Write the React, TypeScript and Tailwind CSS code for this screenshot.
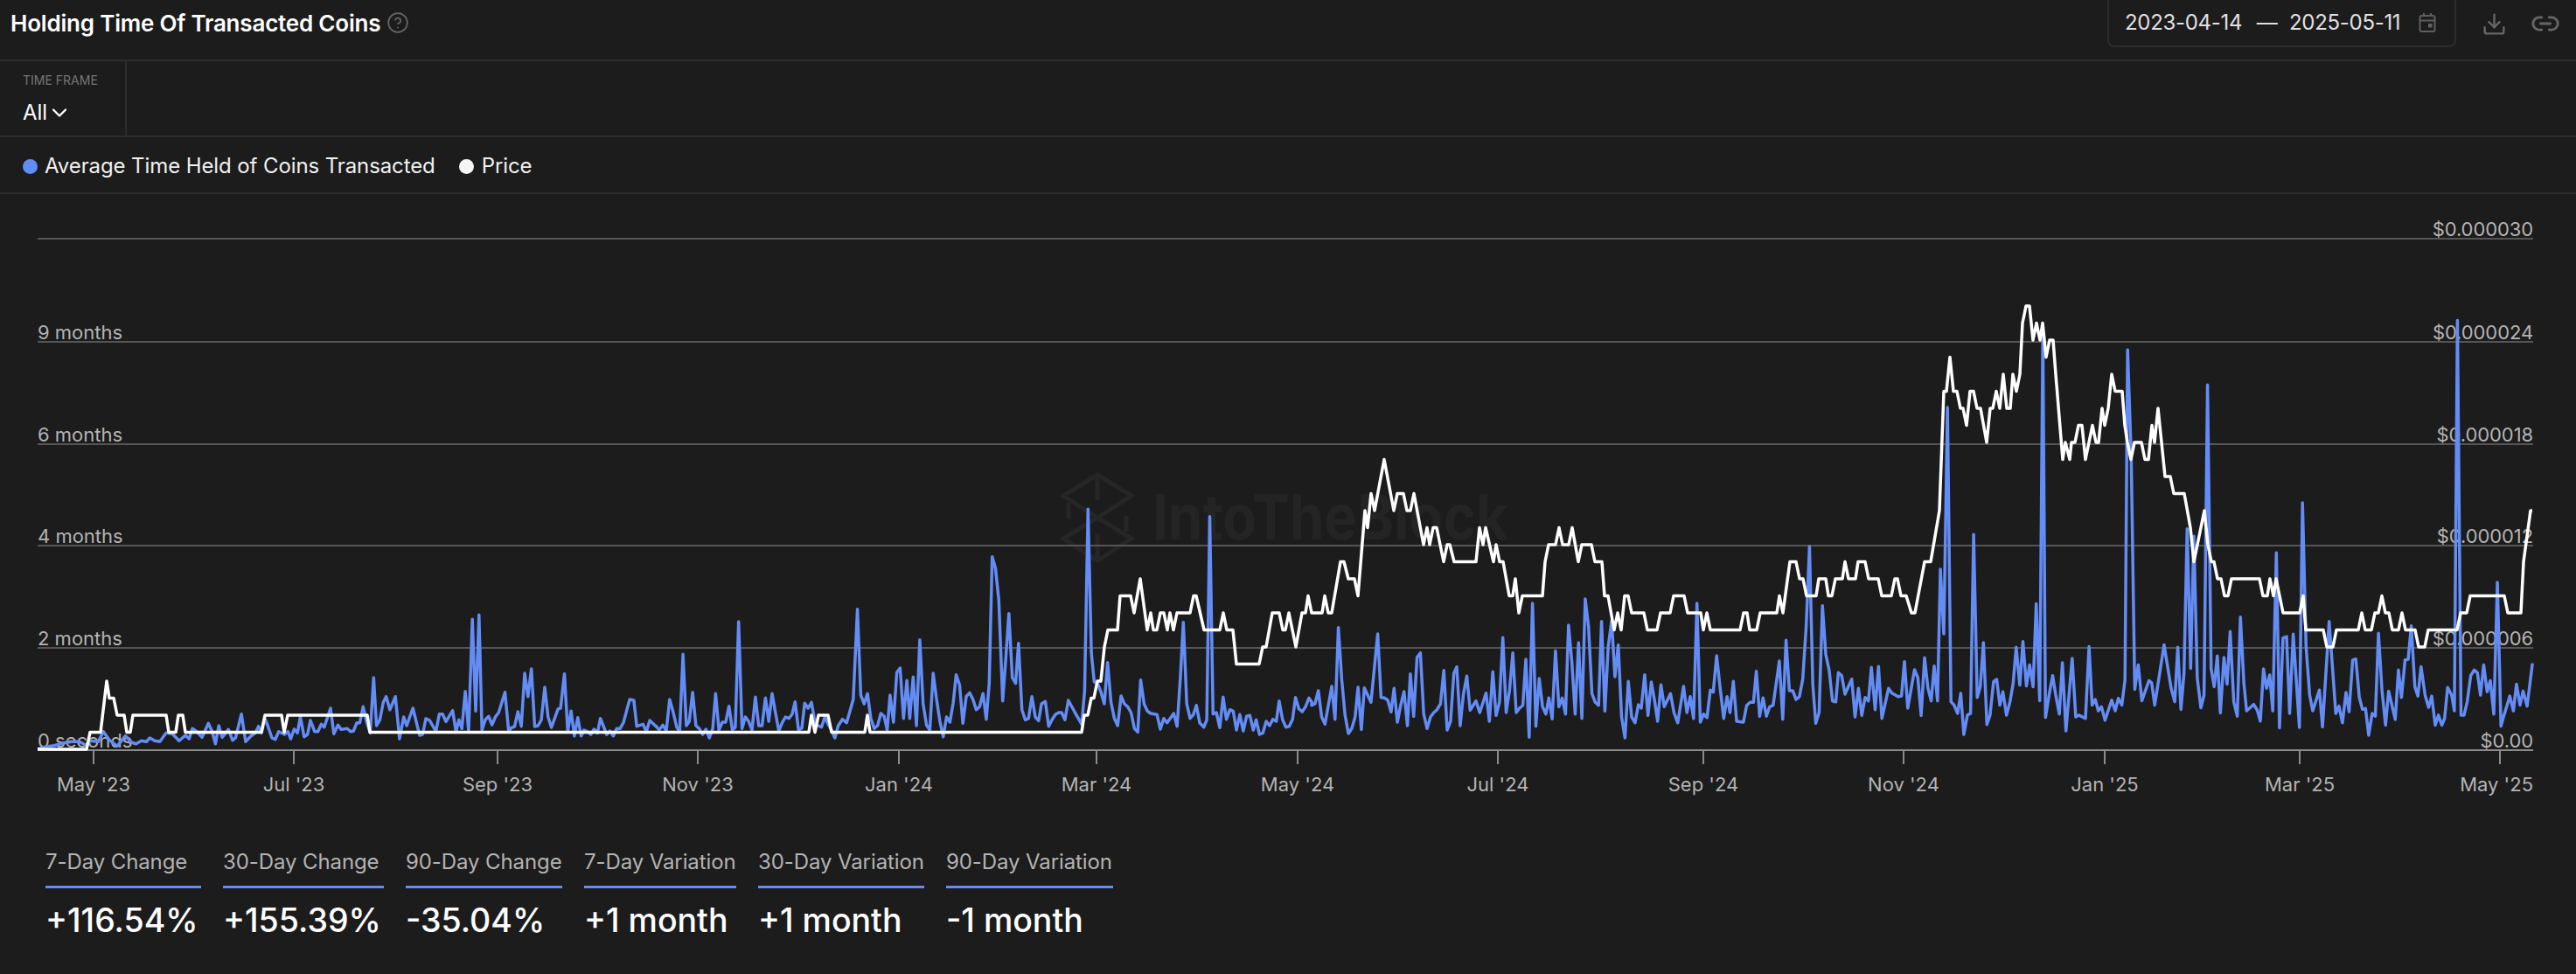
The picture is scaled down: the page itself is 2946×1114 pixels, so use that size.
import { ChevronDown, CircleHelp, Download, Link2 } from "lucide-react";

const AXIS_Y = 858;
const LEFT = 43;
const RIGHT = 2897;

// price is quantised, so it is kept as [x, steps above zero]
const priceSteps: [number, number][] = [
  [43, 0], [99, 0], [103, 1], [115, 1], [122, 4], [125, 3], [130, 3], [134, 2], [142, 2], [145, 1], [149, 1], [152, 2], [190, 2], [193, 1], [201, 1], [204, 2], [209, 2], [212, 1], [299, 1], [303, 2], [322, 2], [325, 1], [329, 2], [420, 2], [423, 1],
  [925, 1], [928, 2], [932, 1], [936, 2], [947, 2], [951, 1], [989, 1], [992, 2], [995, 1], [1237, 1], [1240, 2], [1244, 2], [1248, 3], [1251, 3], [1255, 4], [1259, 4], [1263, 6], [1267, 7], [1278, 7], [1281, 9], [1293, 9], [1297, 8], [1304, 10], [1312, 7], [1316, 8], [1319, 7], [1323, 7], [1327, 8], [1331, 8], [1335, 7], [1338, 8], [1342, 7], [1346, 8], [1361, 8], [1365, 9], [1368, 9], [1377, 7], [1395, 7], [1399, 8], [1403, 7], [1410, 7], [1414, 5], [1440, 5], [1444, 6], [1448, 6], [1455, 8], [1463, 8], [1467, 7], [1470, 7], [1474, 8], [1482, 6], [1489, 8], [1493, 8], [1496, 9], [1500, 8],
  [1512, 8], [1515, 9], [1519, 8], [1523, 8], [1533, 11], [1537, 11], [1542, 10], [1549, 10], [1553, 9], [1561, 14], [1564, 13], [1568, 15], [1572, 14], [1583, 17], [1594, 14], [1598, 15], [1605, 15], [1609, 14], [1613, 14], [1617, 15], [1628, 12], [1632, 13], [1635, 12], [1639, 13], [1643, 13], [1651, 11], [1655, 12], [1658, 12], [1663, 11], [1688, 11], [1692, 13], [1696, 12], [1699, 13], [1708, 11], [1711, 12], [1715, 11], [1719, 11], [1726, 9], [1730, 9], [1733, 10], [1737, 8], [1741, 9], [1764, 9], [1767, 11], [1771, 12], [1779, 12], [1783, 13], [1787, 12], [1794, 12], [1798, 13], [1805, 11], [1809, 12], [1820, 12], [1824, 11], [1832, 11], [1835, 9], [1839, 9], [1846, 7], [1850, 8], [1854, 7], [1858, 9], [1862, 9], [1866, 8], [1880, 8], [1884, 7], [1895, 7], [1899, 8], [1910, 8], [1914, 9], [1926, 9], [1930, 8], [1945, 8], [1948, 7], [1952, 8], [1956, 7], [1990, 7], [1994, 8], [1998, 8], [2001, 7], [2009, 7], [2013, 8], [2032, 8], [2035, 9], [2039, 8], [2047, 11], [2054, 11], [2058, 10], [2062, 10], [2066, 9], [2077, 9], [2080, 10], [2088, 10], [2091, 9], [2095, 9], [2099, 10], [2107, 10], [2110, 11], [2114, 10], [2122, 10], [2125, 11], [2133, 11], [2137, 10], [2148, 10], [2152, 9], [2163, 9], [2167, 10], [2170, 10], [2174, 9], [2180, 9], [2186, 8], [2190, 8], [2201, 11], [2208, 11], [2218, 14], [2223, 21], [2226, 21], [2230, 23], [2234, 21], [2238, 21], [2242, 20], [2245, 20], [2249, 19], [2253, 21], [2257, 21], [2261, 20], [2265, 20], [2272, 18], [2276, 20], [2279, 20], [2283, 21], [2287, 20], [2291, 22], [2295, 20], [2299, 20], [2302, 22], [2306, 21], [2310, 22], [2313, 25], [2317, 26], [2321, 26], [2325, 24], [2329, 25], [2333, 24], [2336, 25], [2340, 23], [2344, 24], [2348, 24], [2351, 22], [2359, 17], [2362, 18], [2367, 17], [2369, 18], [2373, 18], [2377, 19], [2381, 19], [2385, 17], [2393, 19], [2397, 18], [2400, 18], [2404, 20], [2407, 19], [2411, 20], [2415, 22], [2419, 21], [2427, 21], [2430, 19], [2433, 18], [2437, 17], [2441, 18], [2449, 18], [2453, 17], [2457, 17], [2461, 19], [2464, 18], [2468, 20], [2476, 16], [2482, 16], [2486, 15], [2498, 15], [2505, 13], [2509, 11], [2521, 14], [2525, 12], [2529, 11], [2532, 11], [2536, 10], [2540, 10], [2544, 9], [2548, 9], [2552, 10], [2584, 10], [2588, 9], [2593, 9], [2596, 10], [2600, 9], [2603, 10], [2611, 8], [2630, 8], [2634, 9], [2637, 7], [2657, 7], [2661, 6], [2668, 6], [2672, 7], [2697, 7], [2701, 8], [2705, 7], [2712, 7], [2716, 8], [2720, 8], [2724, 9], [2728, 8], [2732, 8], [2736, 7], [2743, 7], [2747, 8], [2751, 7], [2762, 7], [2766, 6], [2773, 6], [2777, 7], [2810, 7], [2814, 8], [2821, 8], [2825, 9], [2864, 9], [2868, 8], [2883, 8], [2886, 11], [2894, 14], [2896, 14],
];

const holdingA: [number, number][] = [
  [90, 650], [110, 642], [130, 638], [150, 630], [170, 625], [190, 625], [205, 637], [215, 622], [235, 625], [247, 590], [262, 620], [280, 640], [300, 605], [315, 628], [325, 632], [338, 622], [350, 625], [358, 612], [370, 622], [382, 625], [397, 595], [412, 598], [428, 622], [443, 603], [452, 615], [460, 580], [470, 590], [483, 610], [498, 562], [507, 590], [515, 632], [523, 570], [531, 610], [546, 583], [556, 620], [563, 612], [577, 530], [587, 625], [600, 605], [610, 595], [618, 572], [625, 595], [633, 545], [640, 570], [650, 612], [658, 617], [666, 590], [680, 600], [688, 590], [695, 615], [703, 582], [711, 595], [718, 540], [727, 608], [735, 600], [742, 552], [752, 590], [760, 590], [768, 565], [775, 575], [790, 510], [798, 598], [808, 568], [815, 583], [830, 580], [838, 590], [845, 588], [853, 560], [860, 560], [868, 505], [877, 560], [885, 595], [893, 405], [900, 570], [908, 550], [916, 490], [923, 470], [932, 515], [945, 470], [955, 615], [965, 540], [972, 570], [987, 510], [1003, 603], [1010, 600], [1018, 545], [1027, 552], [1042, 590], [1050, 530], [1058, 530], [1066, 556], [1082, 518], [1090, 590], [1097, 550], [1104, 580], [1112, 452], [1120, 590], [1129, 205], [1137, 520], [1145, 190], [1152, 585], [1160, 550], [1168, 538], [1176, 567], [1184, 540], [1192, 525], [1207, 455], [1216, 592], [1222, 577], [1230, 573], [1238, 522], [1246, 572], [1254, 390], [1262, 470], [1270, 375], [1278, 573], [1286, 570], [1294, 550], [1302, 438], [1310, 540], [1318, 576], [1334, 512], [1340, 510], [1349, 392], [1357, 590], [1365, 520], [1373, 605], [1381, 542], [1389, 605], [1396, 585], [1404, 590], [1412, 600], [1420, 582], [1428, 595], [1435, 545], [1450, 600], [1458, 588], [1466, 605], [1474, 580], [1482, 580], [1490, 560], [1505, 480], [1515, 483], [1522, 572], [1537, 565], [1545, 590], [1553, 552], [1568, 572],
];

const holdingB: [number, number][] = [
  [0, 870], [8, 885], [17, 868], [25, 888], [33, 780], [41, 820], [50, 875], [57, 890], [65, 625], [73, 870], [80, 855], [88, 755], [96, 870], [104, 880], [112, 900], [120, 882], [128, 912], [136, 880], [143, 760], [151, 885], [159, 858], [167, 858], [175, 803], [183, 885], [190, 875], [198, 513], [206, 880], [214, 840], [222, 855], [230, 885], [238, 772], [246, 870], [254, 870], [262, 775], [270, 855], [278, 760], [286, 825], [294, 888], [302, 860], [310, 840], [318, 845], [326, 830], [333, 788], [341, 885], [349, 878], [356, 793], [364, 810], [372, 790], [380, 855], [388, 870], [396, 875], [404, 840], [412, 865], [420, 885], [428, 912], [436, 870], [446, 848], [456, 860], [472, 780], [482, 470], [490, 765], [498, 795], [506, 760], [514, 845], [522, 880], [530, 870], [538, 828], [546, 838], [553, 885], [560, 765], [568, 858], [576, 688], [584, 672], [592, 845], [600, 715], [607, 845], [615, 703], [623, 870], [631, 575], [639, 795], [647, 868], [655, 885], [663, 690], [671, 780], [679, 855], [687, 908], [695, 840], [703, 858], [711, 790], [718, 695], [726, 730], [734, 862], [742, 770], [750, 757], [758, 780], [766, 815], [774, 805], [782, 760], [790, 848], [797, 725], [804, 290], [812, 330], [820, 440], [829, 785], [836, 650], [844, 485], [852, 705], [860, 725], [867, 587], [875, 815], [883, 850], [891, 845], [899, 770], [907, 840], [915, 853], [922, 795], [931, 787], [939, 872], [947, 850], [955, 832], [963, 825], [970, 825], [978, 850], [986, 783], [1002, 825], [1018, 865], [1025, 750], [1033, 127], [1041, 620], [1048, 720], [1056, 725], [1064, 755], [1072, 795], [1080, 653], [1088, 790], [1096, 845], [1104, 870], [1112, 768], [1120, 795], [1128, 805], [1136, 825], [1144, 880], [1152, 892], [1159, 713], [1167, 795], [1175, 820], [1183, 828], [1198, 832], [1206, 882], [1214, 845], [1222, 860], [1238, 828], [1246, 872], [1254, 700], [1261, 515], [1269, 795], [1277, 845], [1285, 832], [1292, 800], [1300, 860], [1310, 875], [1317, 850], [1324, 152], [1332, 830], [1340, 825], [1348, 877], [1356, 772], [1364, 848], [1372, 815], [1380, 820], [1388, 885], [1396, 832], [1404, 888], [1412, 838], [1420, 835], [1428, 885], [1435, 850], [1443, 900], [1451, 895], [1459, 855], [1467, 870], [1475, 848], [1483, 855], [1490, 785], [1498, 848], [1506, 875], [1514, 872], [1522, 848], [1529, 773], [1537, 812], [1545, 822], [1553, 805], [1561, 775], [1568, 790],
];

const holdingC: [number, number][] = [
  [0, 920], [8, 915], [16, 870], [24, 960], [32, 985], [48, 855], [56, 968], [64, 653], [72, 830], [80, 955], [88, 1017], [96, 1000], [104, 960], [111, 858], [119, 1003], [126, 860], [134, 885], [142, 910], [158, 675], [166, 893], [174, 895], [182, 902], [190, 943], [197, 862], [205, 978], [213, 920], [221, 873], [229, 990], [236, 812], [244, 958], [252, 755], [260, 740], [268, 950], [276, 1000], [284, 960], [292, 945], [300, 935], [308, 915], [316, 800], [324, 1005], [332, 975], [340, 810], [347, 788], [355, 990], [363, 880], [371, 820], [379, 937], [393, 905], [402, 945], [417, 878], [425, 975], [433, 805], [441, 955], [449, 910], [457, 688], [465, 945], [473, 870], [481, 740], [489, 945], [497, 930], [505, 920], [512, 762], [520, 1030], [528, 570], [536, 992], [544, 828], [552, 925], [560, 950], [567, 895], [575, 967], [583, 733], [591, 925], [599, 895], [607, 950], [614, 645], [622, 770], [630, 950], [638, 705], [646, 965], [654, 555], [662, 650], [670, 880], [678, 910], [686, 920], [693, 632], [701, 940], [709, 720], [717, 630], [725, 822], [733, 713], [741, 960], [749, 1032], [757, 838], [765, 960], [773, 980], [781, 918], [788, 930], [796, 815], [804, 955], [812, 840], [820, 905], [827, 975], [835, 850], [843, 925], [858, 880], [866, 945], [875, 980], [889, 855], [897, 945], [905, 890], [913, 965], [921, 570], [929, 978], [937, 950], [945, 962], [953, 868], [960, 875], [968, 750], [976, 855], [985, 965], [993, 890], [1000, 945], [1008, 838], [1016, 975], [1032, 978], [1040, 920], [1048, 910], [1056, 910], [1063, 803], [1071, 958], [1079, 895], [1087, 958], [1095, 925], [1103, 920], [1118, 768], [1126, 968], [1134, 697], [1142, 870], [1150, 870], [1158, 900], [1166, 890], [1174, 830], [1182, 650], [1190, 375], [1198, 850], [1205, 982], [1213, 945], [1221, 578], [1229, 745], [1237, 800], [1245, 905], [1253, 908], [1259, 808], [1267, 818], [1275, 882], [1291, 830], [1299, 960], [1307, 862], [1315, 955], [1323, 893], [1331, 905], [1338, 790], [1347, 935], [1355, 787], [1363, 965], [1379, 862], [1387, 878], [1402, 890], [1410, 888], [1417, 770], [1425, 930], [1441, 798], [1449, 825], [1457, 955], [1465, 757], [1473, 860], [1481, 905], [1488, 785], [1496, 905], [1503, 453], [1511, 675],
];

const holdingD: [number, number][] = [
  [152, 355], [160, 1235], [167, 1245], [175, 1270], [182, 1210], [189, 1333], [197, 1275], [204, 1270], [211, 735], [219, 1222], [226, 1190], [233, 1058], [241, 1303], [248, 1275], [256, 1175], [263, 1168], [270, 1245], [277, 1205], [285, 1275], [293, 1235], [300, 1180], [307, 1072], [315, 1185], [322, 1055], [330, 1188], [337, 1125], [345, 1190], [352, 942], [360, 1232], [367, 130], [373, 1282], [381, 1215], [389, 1157], [396, 1215], [404, 1272], [411, 1118], [419, 1322], [433, 1105], [441, 1280], [448, 1275], [463, 1285], [471, 1070], [478, 1245], [485, 1228], [492, 1262], [499, 1250], [507, 1290], [522, 1230], [530, 1262], [537, 1225], [545, 1245], [552, 1170], [558, 183], [566, 500], [574, 1198], [582, 1125], [590, 1232], [606, 1172], [612, 1178], [619, 1245], [640, 1065], [656, 1195], [664, 1235], [671, 1072], [678, 1258], [685, 1150], [692, 718], [700, 1135], [707, 740], [715, 1165], [723, 1253], [730, 1215], [738, 288], [746, 1135], [753, 1190], [760, 1098], [767, 1268], [775, 1103], [782, 1182], [789, 1025], [797, 1235], [805, 1278], [812, 982], [820, 1180], [826, 1262], [842, 1243], [850, 1260], [857, 1293], [864, 1137], [871, 1195], [878, 1155], [885, 1262], [893, 790], [900, 1313], [908, 1045], [916, 1040], [923, 1270], [931, 1033], [945, 1312], [952, 640], [960, 1070], [968, 1215], [975, 1262], [990, 1200], [997, 1310], [1012, 995], [1027, 1270], [1034, 1248], [1042, 1298], [1050, 1207], [1057, 1265], [1065, 1110], [1072, 1107], [1080, 1222], [1087, 1258], [1094, 1255], [1101, 1335], [1109, 1270], [1116, 1278], [1123, 1030], [1131, 1200], [1139, 1305], [1146, 1203], [1161, 1288], [1168, 1140], [1175, 1222], [1183, 1110], [1190, 1108], [1197, 1008], [1205, 1190], [1212, 1218], [1219, 1130], [1228, 1215], [1236, 1252], [1243, 1218], [1251, 1305], [1258, 1275], [1266, 1305], [1272, 1285], [1279, 1192], [1288, 1215], [1294, 1262], [1301, 95], [1309, 1275], [1316, 1275], [1323, 1235], [1331, 1157], [1339, 1140], [1346, 1148], [1353, 1215], [1360, 1125], [1368, 1205], [1375, 1172], [1383, 1272], [1391, 878], [1399, 1308], [1406, 1275], [1414, 1240], [1419, 1218], [1427, 1262], [1434, 1182], [1442, 1245], [1449, 1203], [1458, 1248], [1470, 1120],
];

const toPoints = (list: number[][]) => list.map(([x, y]) => `${x.toFixed(1)},${y.toFixed(1)}`).join(" ");

const holdingLine = toPoints([
  ...holdingA.map(([x, y]) => [x / 2.09, 640 + y / 3]),
  ...holdingB.map(([x, y]) => [750 + x / 2.09, 540 + y / 3]),
  ...holdingC.map(([x, y]) => [1500 + x / 2.09, 500 + y / 3]),
  ...holdingD.map(([x, y]) => [2150 + x / 1.97, 330 + y / 2.613]),
]);

const priceLine = toPoints(priceSteps.map(([x, n]) => [x, AXIS_Y - 1 - n * 19.5]));

const leftLabels = [
  { y: 858, label: "0 seconds" },
  { y: 741, label: "2 months" },
  { y: 624, label: "4 months" },
  { y: 508, label: "6 months" },
  { y: 391, label: "9 months" },
];

const rightLabels = [
  { y: 858, label: "$0.00" },
  { y: 741, label: "$0.000006" },
  { y: 624, label: "$0.000012" },
  { y: 508, label: "$0.000018" },
  { y: 391, label: "$0.000024" },
  { y: 273, label: "$0.000030" },
];

const ticks = [
  { x: 107, label: "May '23" },
  { x: 336, label: "Jul '23" },
  { x: 569, label: "Sep '23" },
  { x: 798, label: "Nov '23" },
  { x: 1028, label: "Jan '24" },
  { x: 1254, label: "Mar '24" },
  { x: 1484, label: "May '24" },
  { x: 1713, label: "Jul '24" },
  { x: 1948, label: "Sep '24" },
  { x: 2177, label: "Nov '24" },
  { x: 2407, label: "Jan '25" },
  { x: 2630, label: "Mar '25" },
  { x: 2859, label: "May '25" },
];

const stats = [
  { label: "7-Day Change", value: "+116.54%", width: "w-[178px]" },
  { label: "30-Day Change", value: "+155.39%", width: "w-[184px]" },
  { label: "90-Day Change", value: "-35.04%", width: "w-[179px]" },
  { label: "7-Day Variation", value: "+1 month", width: "w-[174px]" },
  { label: "30-Day Variation", value: "+1 month", width: "w-[190px]" },
  { label: "90-Day Variation", value: "-1 month", width: "w-[191px]" },
];

function CalendarIcon() {
  return (
    <svg viewBox="0 0 20 24" className="h-[24px] w-[20px] text-[#5f5f5f]" fill="none" stroke="currentColor" strokeWidth="2">
      <rect x="1.5" y="4" width="17" height="18" rx="2" />
      <path d="M1.5 9.5h17M6 1v3M14 1v3" />
      <rect x="11" y="13" width="4.5" height="4.5" fill="currentColor" stroke="none" />
    </svg>
  );
}

function Chart() {
  return (
    <svg viewBox="0 222 2946 708" className="block h-[708px] w-[2946px]">
      {/* watermark */}
      <g fill="none" stroke="#262626" strokeWidth="5">
        <path d="M1255 543l39 24-39 25-39-25z" />
        <path d="M1255 592l39 24-39 25-39-25z" />
        <path d="M1255 543v29M1255 610v31M1222 575v18M1288 590v18" />
      </g>
      <text x="1318" y="617" fill="#242424" fontSize="72" fontWeight="700" textLength={407} lengthAdjust="spacingAndGlyphs">
        IntoTheBlock
      </text>

      {leftLabels.map((l) => (
        <text key={l.label} x={LEFT} y={l.y - 3} fill="#b3b3b3" fontSize="22">
          {l.label}
        </text>
      ))}
      {rightLabels.map((l) => (
        <text key={l.label} x={RIGHT} y={l.y - 3} fill="#b3b3b3" fontSize="22" textAnchor="end" letterSpacing="-0.1">
          {l.label}
        </text>
      ))}

      {rightLabels.slice(1).map((l) => (
        <line key={l.y} x1={LEFT} x2={RIGHT} y1={l.y} y2={l.y} stroke="#555555" strokeWidth="2" />
      ))}
      <line x1={LEFT} x2={RIGHT} y1={AXIS_Y} y2={AXIS_Y} stroke="#8c8c8c" strokeWidth="2" />

      {ticks.map((t) => (
        <g key={t.label}>
          <line x1={t.x} x2={t.x} y1={AXIS_Y} y2={874} stroke="#8c8c8c" strokeWidth="2" />
          <text
            x={t.label === "May '25" ? RIGHT : t.x}
            y={905}
            fill="#b3b3b3"
            fontSize="22"
            textAnchor={t.label === "May '25" ? "end" : "middle"}
          >
            {t.label}
          </text>
        </g>
      ))}

      <polyline points={holdingLine} fill="none" stroke="#648cf5" strokeWidth="3.5" strokeLinejoin="round" />
      <polyline points={priceLine} fill="none" stroke="#ffffff" strokeWidth="3.5" strokeLinejoin="round" />
    </svg>
  );
}

export default function App() {
  return (
    <div className="h-[1114px] w-[2946px] overflow-hidden bg-[#1c1c1c] font-['Inter',sans-serif] text-white">
      {/* Title row */}
      <header className="flex h-[70px] items-start justify-between border-b-2 border-[#2c2c2c] pl-[12px] pr-[18px]">
        <div className="flex h-[52px] items-center gap-[7px]">
          <h1 className="whitespace-nowrap text-[26px] font-semibold tracking-[-0.2px]">Holding Time Of Transacted Coins</h1>
          <CircleHelp className="h-[26px] w-[26px] text-[#666666]" strokeWidth={1.6} />
        </div>
        <div className="flex h-[54px] items-center">
          <div className="flex h-[54px] w-[399px] items-center whitespace-nowrap rounded-b-[8px] border-2 border-t-0 border-[#2c2c2c] pl-[18px] text-[24px] tracking-[-0.3px] text-[#e0e0e0]">
            <span className="w-[135px]">2023-04-14</span>
            <span className="ml-[15px] w-[25px] text-center">—</span>
            <span className="ml-[13px] w-[130px]">2025-05-11</span>
            <span className="ml-[18px]">
              <CalendarIcon />
            </span>
          </div>
          <Download className="ml-[29px] h-[29px] w-[29px] text-[#666666]" strokeWidth={2} />
          <Link2 className="ml-[27px] h-[34px] w-[34px] text-[#666666]" strokeWidth={2} />
        </div>
      </header>

      {/* Filters */}
      <div className="flex h-[87px] border-b-2 border-[#2c2c2c]">
        <div className="w-[145px] border-r-2 border-[#2c2c2c] pl-[26px] pt-[13px]">
          <div className="text-[14px] leading-[18px] text-[#757575]">TIME FRAME</div>
          <div className="mt-[12px] flex items-center text-[24px] leading-[32px]">
            All
            <ChevronDown className="h-[28px] w-[28px]" strokeWidth={2} />
          </div>
        </div>
      </div>

      {/* Legend */}
      <div className="flex h-[65px] items-center border-b-2 border-[#2c2c2c] pl-[26px] pt-[3px] text-[24px] font-normal tracking-[-0.1px] text-[#f0f0f0]">
        <span className="h-[17px] w-[17px] rounded-full bg-[#648cf5]" />
        <span className="ml-[8px]">Average Time Held of Coins Transacted</span>
        <span className="ml-[27px] h-[17px] w-[17px] rounded-full bg-[#f5f5f5]" />
        <span className="ml-[9px]">Price</span>
      </div>

      <Chart />

      {/* Stats */}
      <div className="flex gap-[25px] pl-[52px] pt-[40px]">
        {stats.map((s) => (
          <div key={s.label} className={s.width}>
            <div className="whitespace-nowrap border-b-[3px] border-[#648cf5] pb-[11px] text-[24px] leading-[32px] tracking-[-0.1px] text-[#b3b3b3]">
              {s.label}
            </div>
            <div className="mt-[15px] whitespace-nowrap text-[37.5px] font-medium leading-[44px]">{s.value}</div>
          </div>
        ))}
      </div>
    </div>
  );
}
